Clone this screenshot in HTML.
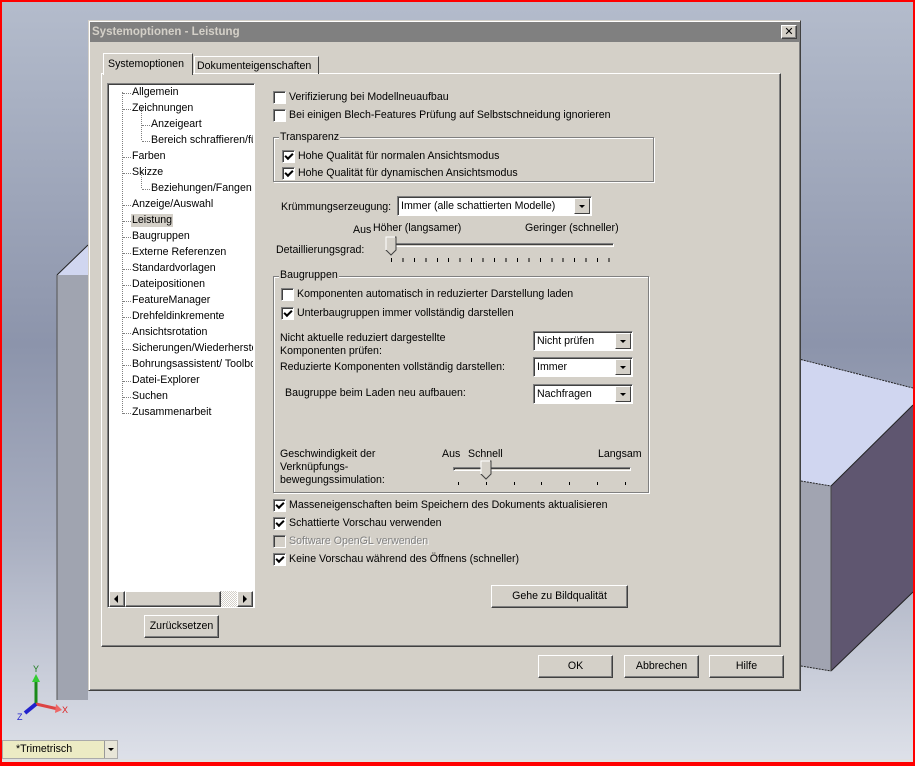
<!DOCTYPE html>
<html><head><meta charset="utf-8"><style>
*{box-sizing:border-box;margin:0;padding:0}
body{width:915px;height:766px;overflow:hidden;position:relative;font-family:"Liberation Sans",sans-serif;font-size:10.6px;color:#000;background:linear-gradient(180deg,#b4bccc 0%,#8c94ab 45%,#a8aec0 70%,#dfe2ea 100%)}
.a{position:absolute;white-space:nowrap;line-height:13px}
.cb{position:absolute;width:13px;height:13px;background:#fff;border:1px solid;border-color:#808080 #fff #fff #808080;box-shadow:inset 1px 1px 0 #404040}
.cb.on::after{content:"";position:absolute;width:6px;height:3px;border-left:2px solid #000;border-bottom:2px solid #000;transform:rotate(-45deg);top:2px;left:2px}
.cb.dis{background:#d4d0c8}
.btn{position:absolute;background:#d4d0c8;border:1px solid;border-color:#fff #404040 #404040 #fff;box-shadow:inset -1px -1px 0 #808080;text-align:center;line-height:20px}
.grp{position:absolute;border:1px solid #808080;box-shadow:1px 1px 0 #fff,inset 1px 1px 0 #fff}
.glab{position:absolute;background:#d4d0c8;padding:0 1px;line-height:13px}
.sel{position:absolute;background:#fff;border:1px solid;border-color:#808080 #fff #fff #808080;box-shadow:inset 1px 1px 0 #404040;padding-left:3px;line-height:19px}
.sel .ar{position:absolute;right:1px;top:1px;width:16px;height:16px;background:#d4d0c8;border:1px solid;border-color:#fff #404040 #404040 #fff}
.sel .ar::after{content:"";position:absolute;left:4px;top:6px;border-left:3px solid transparent;border-right:3px solid transparent;border-top:3px solid #000}
.dl{position:absolute;width:8px;border-top:1px dotted #808080}
.dv{position:absolute;border-left:1px dotted #808080}
.tick{position:absolute;width:1px;height:3px;background:#000}
</style></head><body>
<svg width="915" height="766" style="position:absolute;left:0;top:0">
<polygon points="57,275 88,245 88,700 57,700" fill="#a0a4b0"/>
<polygon points="57,275 88,245 88,275" fill="#d0d6f0"/>
<line x1="57" y1="275" x2="88" y2="245" stroke="#222" stroke-width="1"/>
<line x1="57" y1="275" x2="57" y2="700" stroke="#555"/>
<polygon points="795,358 913,388 913,405 831,486 795,480" fill="#d0d6f0"/>
<polygon points="795,480 831,486 831,671 795,665" fill="#a1a4b1"/>
<polygon points="831,486 913,405 913,592 831,671" fill="#5f5670"/>
<line x1="795" y1="358" x2="913" y2="388" stroke="#222" stroke-dasharray="2,1"/>
<line x1="831" y1="486" x2="913" y2="405" stroke="#222"/>
<line x1="831" y1="671" x2="913" y2="592" stroke="#222"/>
<line x1="831" y1="486" x2="831" y2="671" stroke="#444"/>
<line x1="795" y1="480" x2="831" y2="486" stroke="#222" stroke-dasharray="2,1"/>
<line x1="795" y1="665" x2="831" y2="671" stroke="#222" stroke-dasharray="2,1"/>
<line x1="36" y1="704" x2="36" y2="678" stroke="#1a8a1a" stroke-width="3"/>
<polygon points="32,682 40,682 36,674" fill="#3c3"/>
<text x="33" y="672" font-size="9" fill="#1a7a1a" font-family="Liberation Sans">Y</text>
<line x1="36" y1="704" x2="58" y2="709" stroke="#d44" stroke-width="3"/>
<polygon points="56,704 62,710 55,713" fill="#e66"/>
<text x="62" y="713" font-size="9" fill="#d22" font-family="Liberation Sans">X</text>
<line x1="36" y1="704" x2="25" y2="713" stroke="#22c" stroke-width="4"/>
<text x="17" y="720" font-size="9" fill="#22c" font-family="Liberation Sans">Z</text>
</svg>
<div style="position:absolute;left:0;top:0;width:915px;height:766px;border:2px solid #f00;border-bottom-width:4px;pointer-events:none;z-index:5"></div>
<div style="position:absolute;left:2px;top:740px;width:116px;height:19px;background:#ecebc4;border:1px solid #aaa"></div>
<div class="a" style="left:16px;top:743px">*Trimetrisch</div>
<div style="position:absolute;left:104px;top:741px;width:13px;height:17px;background:#e8e6d8;border-left:1px solid #999"></div>
<div style="position:absolute;left:108px;top:748px;border-left:3px solid transparent;border-right:3px solid transparent;border-top:3px solid #000"></div>
<div style="position:absolute;left:2px;top:759px;width:911px;height:3px;background:#e0e0e0"></div>

<div style="position:absolute;left:88px;top:20px;width:713px;height:671px;background:#d4d0c8;border:1px solid;border-color:#d4d0c8 #404040 #404040 #d4d0c8;box-shadow:inset 1px 1px 0 #fff,inset -1px -1px 0 #808080"></div>
<div style="position:absolute;left:90px;top:22px;width:709px;height:20px;background:#808080"></div>
<div class="a" style="left:92px;top:26px;color:#d4d0c8;font-weight:bold;font-size:11.5px">Systemoptionen - Leistung</div>
<div class="btn" style="left:781px;top:25px;width:16px;height:14px;line-height:12px;font-size:11px">✕</div>

<div style="position:absolute;left:101px;top:73px;width:680px;height:574px;border:1px solid;border-color:#fff #404040 #404040 #fff;box-shadow:inset -1px -1px 0 #808080"></div>
<div style="position:absolute;left:103px;top:53px;width:90px;height:22px;background:#d4d0c8;border:1px solid;border-color:#fff #404040 transparent #fff;border-bottom:none"></div>
<div class="a" style="left:108px;top:58px">Systemoptionen</div>
<div style="position:absolute;left:194px;top:56px;width:125px;height:18px;border:1px solid;border-color:#fff #404040 transparent #fff;border-bottom:none"></div>
<div class="a" style="left:197px;top:60px">Dokumenteigenschaften</div>

<div style="position:absolute;left:107px;top:83px;width:148px;height:525px;background:#fff;border:1px solid;border-color:#808080 #fff #fff #808080;box-shadow:inset 1px 1px 0 #404040;overflow:hidden">
<div class="dv" style="left:14px;top:8px;height:322px"></div>
<div class="dv" style="left:33px;top:24px;height:32px"></div>
<div class="dv" style="left:33px;top:88px;height:16px"></div>
<div class="dl" style="left:15px;top:9px"></div><div class="dl" style="left:15px;top:25px"></div>
<div class="dl" style="left:34px;top:41px"></div><div class="dl" style="left:34px;top:57px"></div>
<div class="dl" style="left:15px;top:73px"></div><div class="dl" style="left:15px;top:89px"></div>
<div class="dl" style="left:34px;top:105px"></div>
<div class="dl" style="left:15px;top:121px"></div><div class="dl" style="left:15px;top:137px"></div>
<div class="dl" style="left:15px;top:153px"></div><div class="dl" style="left:15px;top:169px"></div>
<div class="dl" style="left:15px;top:185px"></div><div class="dl" style="left:15px;top:201px"></div>
<div class="dl" style="left:15px;top:217px"></div><div class="dl" style="left:15px;top:233px"></div>
<div class="dl" style="left:15px;top:249px"></div><div class="dl" style="left:15px;top:265px"></div>
<div class="dl" style="left:15px;top:281px"></div><div class="dl" style="left:15px;top:297px"></div>
<div class="dl" style="left:15px;top:313px"></div><div class="dl" style="left:15px;top:329px"></div>
</div>
<div style="position:absolute;left:107px;top:83px;width:146px;height:510px;overflow:hidden">
<div class="a" style="left:25px;top:3px">Allgemein</div>
<div class="a" style="left:25px;top:19px">Zeichnungen</div>
<div class="a" style="left:44px;top:35px">Anzeigeart</div>
<div class="a" style="left:44px;top:51px">Bereich schraffieren/füllen</div>
<div class="a" style="left:25px;top:67px">Farben</div>
<div class="a" style="left:25px;top:83px">Skizze</div>
<div class="a" style="left:44px;top:99px">Beziehungen/Fangen</div>
<div class="a" style="left:25px;top:115px">Anzeige/Auswahl</div>
<div class="a" style="left:24px;top:131px;background:#d4d0c8;padding:0 1px">Leistung</div>
<div class="a" style="left:25px;top:147px">Baugruppen</div>
<div class="a" style="left:25px;top:163px">Externe Referenzen</div>
<div class="a" style="left:25px;top:179px">Standardvorlagen</div>
<div class="a" style="left:25px;top:195px">Dateipositionen</div>
<div class="a" style="left:25px;top:211px">FeatureManager</div>
<div class="a" style="left:25px;top:227px">Drehfeldinkremente</div>
<div class="a" style="left:25px;top:243px">Ansichtsrotation</div>
<div class="a" style="left:25px;top:259px">Sicherungen/Wiederherstellen</div>
<div class="a" style="left:25px;top:275px">Bohrungsassistent/ Toolbox</div>
<div class="a" style="left:25px;top:291px">Datei-Explorer</div>
<div class="a" style="left:25px;top:307px">Suchen</div>
<div class="a" style="left:25px;top:323px">Zusammenarbeit</div>
</div>
<div style="position:absolute;left:109px;top:591px;width:144px;height:16px;background:repeating-conic-gradient(#fff 0 25%,#d4d0c8 0 50%) 0 0/2px 2px"></div>
<div class="btn" style="left:109px;top:591px;width:16px;height:16px"></div>
<div style="position:absolute;left:114px;top:595px;border-top:4px solid transparent;border-bottom:4px solid transparent;border-right:4px solid #000"></div>
<div class="btn" style="left:125px;top:591px;width:96px;height:16px"></div>
<div class="btn" style="left:237px;top:591px;width:16px;height:16px"></div>
<div style="position:absolute;left:243px;top:595px;border-top:4px solid transparent;border-bottom:4px solid transparent;border-left:4px solid #000"></div>
<div class="btn" style="left:144px;top:615px;width:75px;height:23px">Zurücksetzen</div>

<div class="cb" style="left:273px;top:91px"></div><div class="a" style="left:289px;top:91px">Verifizierung bei Modellneuaufbau</div>
<div class="cb" style="left:273px;top:109px"></div><div class="a" style="left:289px;top:109px">Bei einigen Blech-Features Prüfung auf Selbstschneidung ignorieren</div>

<div class="grp" style="left:273px;top:137px;width:381px;height:45px"></div>
<div class="glab" style="left:279px;top:131px">Transparenz</div>
<div class="cb on" style="left:282px;top:150px"></div><div class="a" style="left:298px;top:150px">Hohe Qualität für normalen Ansichtsmodus</div>
<div class="cb on" style="left:282px;top:167px"></div><div class="a" style="left:298px;top:167px">Hohe Qualität für dynamischen Ansichtsmodus</div>

<div class="a" style="left:281px;top:201px">Krümmungserzeugung:</div>
<div class="sel" style="left:397px;top:196px;width:195px;height:20px">Immer (alle schattierten Modelle)<div class="ar"></div></div>

<div class="a" style="left:353px;top:224px">Aus</div>
<div class="a" style="left:373px;top:222px">Höher (langsamer)</div>
<div class="a" style="left:525px;top:222px">Geringer (schneller)</div>
<div class="a" style="left:276px;top:244px">Detaillierungsgrad:</div>
<div style="position:absolute;left:392px;top:243px;width:222px;height:4px;border:1px solid;border-color:#808080 #fff #fff #808080;box-shadow:inset 1px 1px 0 #404040"></div>
<svg style="position:absolute;left:385px;top:236px" width="12" height="20"><polygon points="1,1 11,1 11,14 6,19 1,14" fill="#d4d0c8" stroke="#404040"/><polyline points="1,14 1,1 10,1" fill="none" stroke="#fff"/></svg>

<div class="grp" style="left:273px;top:276px;width:376px;height:217px"></div>
<div class="glab" style="left:279px;top:269px">Baugruppen</div>
<div class="cb" style="left:281px;top:288px"></div><div class="a" style="left:297px;top:288px">Komponenten automatisch in reduzierter Darstellung laden</div>
<div class="cb on" style="left:281px;top:307px"></div><div class="a" style="left:297px;top:307px">Unterbaugruppen immer vollständig darstellen</div>
<div class="a" style="left:280px;top:332px">Nicht aktuelle reduziert dargestellte</div>
<div class="a" style="left:280px;top:345px">Komponenten prüfen:</div>
<div class="sel" style="left:533px;top:331px;width:100px;height:20px">Nicht prüfen<div class="ar"></div></div>
<div class="a" style="left:280px;top:361px">Reduzierte Komponenten vollständig darstellen:</div>
<div class="sel" style="left:533px;top:357px;width:100px;height:20px">Immer<div class="ar"></div></div>
<div class="a" style="left:285px;top:387px">Baugruppe beim Laden neu aufbauen:</div>
<div class="sel" style="left:533px;top:384px;width:100px;height:20px">Nachfragen<div class="ar"></div></div>
<div class="a" style="left:280px;top:448px">Geschwindigkeit der</div>
<div class="a" style="left:280px;top:461px">Verknüpfungs-</div>
<div class="a" style="left:280px;top:474px">bewegungssimulation:</div>
<div class="a" style="left:442px;top:448px">Aus</div>
<div class="a" style="left:468px;top:448px">Schnell</div>
<div class="a" style="left:598px;top:448px">Langsam</div>
<div style="position:absolute;left:453px;top:467px;width:178px;height:4px;border:1px solid;border-color:#808080 #fff #fff #808080;box-shadow:inset 1px 1px 0 #404040"></div>
<svg style="position:absolute;left:480px;top:460px" width="12" height="20"><polygon points="1,1 11,1 11,14 6,19 1,14" fill="#d4d0c8" stroke="#404040"/><polyline points="1,14 1,1 10,1" fill="none" stroke="#fff"/></svg>
<div class="tick" style="left:458px;top:482px"></div><div class="tick" style="left:486px;top:482px"></div><div class="tick" style="left:514px;top:482px"></div><div class="tick" style="left:541px;top:482px"></div><div class="tick" style="left:569px;top:482px"></div><div class="tick" style="left:597px;top:482px"></div><div class="tick" style="left:625px;top:482px"></div>

<div class="cb on" style="left:273px;top:499px"></div><div class="a" style="left:289px;top:499px">Masseneigenschaften beim Speichern des Dokuments aktualisieren</div>
<div class="cb on" style="left:273px;top:517px"></div><div class="a" style="left:289px;top:517px">Schattierte Vorschau verwenden</div>
<div class="cb dis" style="left:273px;top:535px"></div><div class="a" style="left:289px;top:535px;color:#808080;text-shadow:1px 1px 0 #fff">Software OpenGL verwenden</div>
<div class="cb on" style="left:273px;top:553px"></div><div class="a" style="left:289px;top:553px">Keine Vorschau während des Öffnens (schneller)</div>

<div class="btn" style="left:491px;top:585px;width:137px;height:23px">Gehe zu Bildqualität</div>
<div class="btn" style="left:538px;top:655px;width:75px;height:23px">OK</div>
<div class="btn" style="left:624px;top:655px;width:75px;height:23px">Abbrechen</div>
<div class="btn" style="left:709px;top:655px;width:75px;height:23px">Hilfe</div>

<div style="position:absolute;left:391px;top:258px;width:220px;height:4px;background:repeating-linear-gradient(90deg,#000 0 1px,transparent 1px 11.45px)"></div>
</body></html>
